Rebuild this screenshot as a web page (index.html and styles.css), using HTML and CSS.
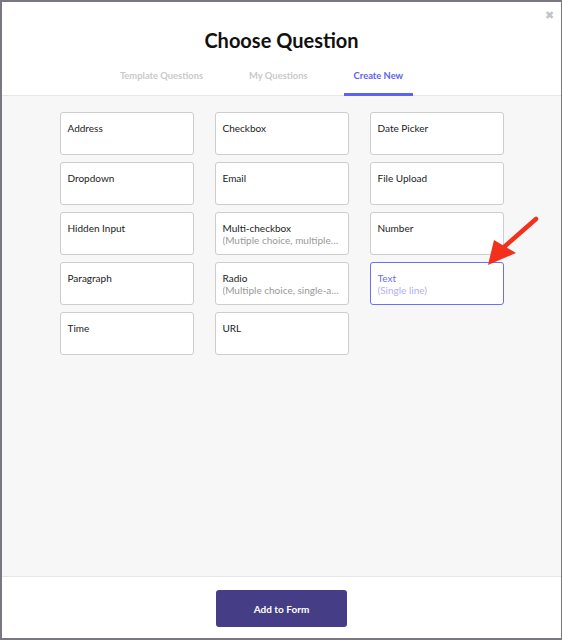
FILE: index.html
```html
<!DOCTYPE html>
<html lang="en">
<head>
    <meta charset="UTF-8">
    <meta name="viewport" content="width=device-width, initial-scale=1.0">
    <title>Choose Question</title>
    <link rel="stylesheet" href="styles.css">
</head>
<body>
    <div class="modal">
        <span class="close">&#x2716;</span>
        <div class="modal-header">
            <h1>Choose Question</h1>
            <div class="tabs">
                <div class="tab">Template Questions</div>
                <div class="tab">My Questions</div>
                <div class="tab active">Create New</div>
            </div>
        </div>
        <div class="modal-body">
            <div class="grid">
                <div class="card"><div class="name">Address</div></div>
                <div class="card"><div class="name">Checkbox</div></div>
                <div class="card"><div class="name">Date Picker</div></div>
                <div class="card"><div class="name">Dropdown</div></div>
                <div class="card"><div class="name">Email</div></div>
                <div class="card"><div class="name">File Upload</div></div>
                <div class="card"><div class="name">Hidden Input</div></div>
                <div class="card">
                    <div class="name">Multi-checkbox</div>
                    <div class="sub">(Mutiple choice, multiple-answer)</div>
                </div>
                <div class="card"><div class="name">Number</div></div>
                <div class="card"><div class="name">Paragraph</div></div>
                <div class="card">
                    <div class="name">Radio</div>
                    <div class="sub">(Multiple choice, single-answer)</div>
                </div>
                <div class="card selected">
                    <div class="name">Text</div>
                    <div class="sub">(Single line)</div>
                </div>
                <div class="card"><div class="name">Time</div></div>
                <div class="card"><div class="name">URL</div></div>
            </div>
        </div>
        <div class="modal-footer">
            <button class="add-btn">Add to Form</button>
        </div>
        <svg class="arrow" width="60" height="60" viewBox="0 0 60 60">
            <line x1="55" y1="8" x2="22" y2="37" stroke="#f3301c" stroke-width="4.5" stroke-linecap="round"/>
            <polygon points="7,54 13,29 35,42" fill="#f3301c"/>
        </svg>
    </div>
</body>
</html>
```

FILE: styles.css
```css
* {
    box-sizing: border-box;
}
html, body {
    margin: 0;
    padding: 0;
}
body {
    font-family: Lato, "Open Sans", "Liberation Sans", sans-serif;
    background-color: #7b7680;
    width: 562px;
    height: 640px;
    overflow: hidden;
}
.modal {
    position: relative;
    margin: 2px 0 0 2px;
    width: 559px;
    height: 636px;
    background-color: #fff;
    display: flex;
    flex-direction: column;
}
.close {
    position: absolute;
    top: 6px;
    right: 7px;
    font-size: 11px;
    color: #c4c4c4;
}
.modal-header {
    padding-top: 26px;
    border-bottom: 1px solid #e6e6e6;
    text-align: center;
}
h1 {
    margin: 0;
    font-size: 20px;
    line-height: 24px;
    font-weight: 700;
    color: #111;
}
.tabs {
    display: flex;
    justify-content: center;
    gap: 26px;
    margin-top: 17px;
    margin-bottom: -1px;
    padding-right: 40px;
}
.tab {
    padding: 0 10px 10px;
    font-size: 9.4px;
    line-height: 14px;
    font-weight: 700;
    color: #c9c9c9;
    border-bottom: 3px solid transparent;
}
.tab.active {
    color: #5c63f2;
    border-bottom-color: #5c63f2;
}
.modal-body {
    flex: 1;
    background-color: #f7f7f7;
    padding-top: 16px;
}
.grid {
    display: grid;
    grid-template-columns: repeat(3, 134px);
    grid-auto-rows: 43px;
    column-gap: 21px;
    row-gap: 7px;
    justify-content: center;
}
.card {
    background-color: #fff;
    border: 1px solid #cdcdcd;
    border-radius: 3px;
    padding: 9px 7px 0;
    font-size: 10px;
    line-height: 12px;
    color: #222;
    overflow: hidden;
}
.card .sub {
    color: #9a9a9a;
    white-space: nowrap;
    overflow: hidden;
    text-overflow: ellipsis;
}
.card.selected {
    border-color: #6b70f2;
    color: #6b70f2;
}
.card.selected .sub {
    color: #aeb1f5;
}
.modal-footer {
    height: 62px;
    border-top: 1px solid #e6e6e6;
    display: flex;
    justify-content: center;
    padding-top: 13px;
}
.add-btn {
    width: 131px;
    height: 37px;
    background-color: #453e86;
    color: #fff;
    border: none;
    border-radius: 3px;
    font-family: Lato, "Open Sans", "Liberation Sans", sans-serif;
    font-size: 10px;
    font-weight: 700;
}
.arrow {
    position: absolute;
    left: 479px;
    top: 209px;
}
```
